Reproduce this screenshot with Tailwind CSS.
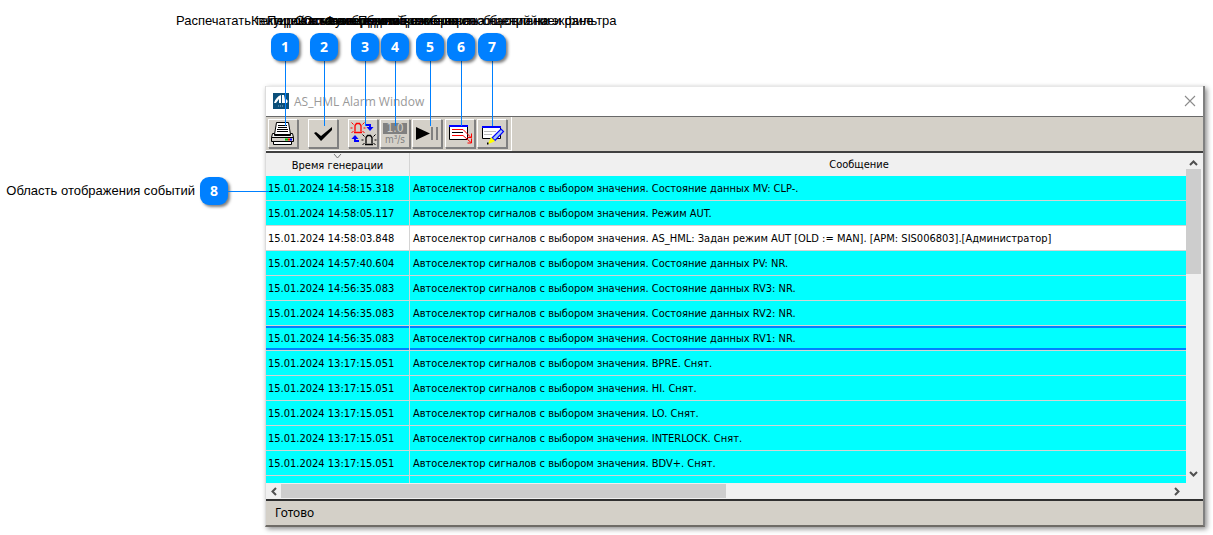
<!DOCTYPE html>
<html lang="ru">
<head>
<meta charset="utf-8">
<title>AS_HML Alarm Window</title>
<script src="https://cdn.jsdelivr.net/npm/@tailwindcss/browser@4"></script>
</head>
<body class="bg-white text-black font-['Liberation_Sans',sans-serif]">
<main class="relative pt-[86px] pr-2 pb-[9px] pl-[265px]">

<section class="border-r-2 border-b-2 border-l border-r-[#808080] border-b-[#6e6b66] border-l-[#dcdcdc] shadow-[2px_2px_5px_rgba(0,0,0,0.45)] bg-[#f0f0f0]">
  <header class="flex h-[30px] items-center justify-between border-t border-[#e8e8e8] bg-white pl-[7px] pr-[7px]">
    <div class="flex items-center gap-[5px]">
      <svg class="mb-[2px] h-4 w-4" viewBox="0 0 16 16" aria-hidden="true"><path fill="#0b4f7a" d="M0 0h16v16H0z"/><path fill="#fff" d="M1 10C2 6 5 3 8 2v8H6V6L3 10zM9 2h2q1 3 1 8H9zM13 6c2 1 2 3 1 4h-1z"/><path stroke="#8db5cc" stroke-dasharray="1 1" d="M5 13h6"/></svg>
      <h1 class="text-xs font-normal text-[#999] font-['Open_Sans',sans-serif]">AS_HML Alarm Window</h1>
    </div>
    <button aria-label="Закрыть"><svg class="mb-[2px] h-3 w-3" viewBox="0 0 12 12" fill="none" stroke="#8c8c8c" stroke-width="1.1"><path d="M1 1l10 10M11 1L1 11"/></svg></button>
  </header>

  <div class="flex h-[37px] border-t border-b-2 border-t-[#696969] border-b-[#404040] bg-[#d4d0c8]">
    <div class="flex h-[34px] items-start gap-[2px] border-r border-b border-white pt-[2px] pr-1 pl-[2px]">
      <button aria-label="Распечатать" class="mr-2 flex h-[29px] w-[30px] items-center justify-center border border-t-white border-l-white border-r-[#808080] border-b-[#808080] shadow-[1px_1px_0_#808080]">
        <svg class="h-7 w-7 shrink-0" viewBox="0 0 28 28"><path fill="#fff" stroke="#000" d="M7.500 2.500h12l2 12h-16z"/><path stroke="#000" d="M9 5.500h9M9 7.500h9M8 9.500h11M8 11.500h11"/><path fill="#eee" stroke="#000" d="M5.500 13.500h-2l-1 4h22l-1-4h-2v2h-16z"/><path fill="#d4d0c8" stroke="#000" d="M2.500 17.500h22v4h-22z"/><path stroke="#00c000" stroke-width="2" d="M16 19.500h3"/><path stroke="red" stroke-width="2" d="M19 19.500h2"/><path stroke="#00f" stroke-width="2" d="M21 19.500h2"/><path fill="#fff" stroke="#000" d="M4.500 21.500h18v3h-18z"/></svg>
      </button>
      <button aria-label="Квитировать" class="mr-2 flex h-[29px] w-[30px] items-center justify-center border border-t-white border-l-white border-r-[#808080] border-b-[#808080] shadow-[1px_1px_0_#808080]">
        <svg class="h-7 w-7 shrink-0" viewBox="0 0 28 28"><path d="M5 13l2-1 5 4 11-9v3L12 21z"/></svg>
      </button>
      <button aria-label="Переключить сигнализацию" class="flex h-[29px] w-[30px] items-center justify-center border border-t-white border-l-white border-r-[#808080] border-b-[#808080] shadow-[1px_1px_0_#808080]">
        <svg class="h-7 w-7 shrink-0" viewBox="0 0 28 28" fill="none"><path stroke="red" stroke-width="1.300" d="M6 11.500V5.500L7.500 3.500h3l1.500 2v6M5 12.500h8"/><path stroke="red" d="M2.500 2.500l2 2M1.500 8h2M2.500 13l2-2M15.500 2.500l-2 2M14.500 8h2M15.500 13l-2-2"/><path stroke="#000" stroke-width="1.300" d="M17 23.500v-6l1.500-2h3l1.500 2v6M16 24.500h8"/><path stroke="#000" d="M13.500 14.500l2 2M12.500 20h2M13.500 25l2-2M26.500 14.500l-2 2M25.500 20h2M26.500 25l-2-2"/><path stroke="#00f" stroke-width="2" d="M17 5h4v3M10 21H6v-2"/><path fill="#00f" d="M17.500 7h7L21 11zM2.500 19h7L6 15z"/></svg>
      </button>
      <button aria-label="Единицы измерения" class="flex h-[29px] w-[30px] flex-col items-center border border-t-white border-l-white border-r-[#808080] border-b-[#808080] shadow-[1px_1px_0_#808080] pt-[3px] text-[#808080] font-['DejaVu_Sans_Condensed',sans-serif]">
        <span class="h-[11px] w-[24px] bg-[#808080] text-xs leading-[11px] text-[#d4d0c8]">1.0</span>
        <span class="text-[10px] leading-3">m³/s</span>
      </button>
      <button aria-label="Пуск и пауза" class="flex h-[29px] w-[30px] items-center justify-center border border-t-white border-l-white border-r-[#808080] border-b-[#808080] shadow-[1px_1px_0_#808080]">
        <svg class="h-7 w-7 shrink-0" viewBox="0 0 28 28"><path d="M3 7l14 6.500L3 20z"/><path fill="#808080" d="M18 7h2v13h-2zM23 7h2v13h-2z"/></svg>
      </button>
      <button aria-label="Сообщения" class="ml-[1px] flex h-[29px] w-[30px] items-center justify-center border border-t-white border-l-white border-r-[#808080] border-b-[#808080] shadow-[1px_1px_0_#808080]">
        <svg class="h-7 w-7 shrink-0" viewBox="0 0 28 28" fill="none"><path fill="#fff" stroke="#000" d="M3.500 5.500h18v14h-18z"/><path stroke="#00f" stroke-width="2" d="M3 6h19"/><path stroke="red" d="M6 9.500h11l8 8M6 15.500h11l8 7M25.500 13.500v4h-4M25.500 18.500v4.500h-4"/><path stroke="#000" d="M6 12.500h11"/></svg>
      </button>
      <button aria-label="Настройка фильтра" class="flex h-[29px] w-[30px] items-center justify-center border border-t-white border-l-white border-r-[#808080] border-b-[#808080] shadow-[1px_1px_0_#808080]">
        <svg class="h-7 w-7 shrink-0" viewBox="0 0 28 28" fill="none"><path fill="#fff" stroke="#000" d="M4.500 6.500h18v12h-18z"/><path stroke="#00f" stroke-width="2" d="M4 7h19"/><path stroke="#bbb" d="M6 11.500h12M6 14.500h8"/><path fill="#a8c8f8" stroke="#00f" stroke-width="1.200" d="M14 18l9-9 2.500 2.500-8.500 9z"/><path fill="#ff0" d="M13 17l4 4-4 2-3 1z"/><path stroke="#000" stroke-width="2" d="M9 23.500h1.500"/></svg>
      </button>
    </div>
  </div>

  <div class="flex">
    <table class="min-w-0 grow table-fixed border-collapse text-[11px] leading-[14px] font-['DejaVu_Sans_Condensed',sans-serif]">
      <colgroup><col class="w-[144px]"><col></colgroup>
      <thead>
        <tr class="h-[23px]">
          <th scope="col" class="p-0 font-normal">
            <span class="flex h-[23px] flex-col items-center border-r border-[#d4d4d4] pt-[1px]"><svg class="h-[5px] w-[9px]" viewBox="0 0 9 5" fill="none" stroke="#777" aria-hidden="true"><path d="M1 0l3.500 4L8 0"/></svg>Время генерации</span>
          </th>
          <th scope="col" class="p-0 pt-[1px] pl-[122px] text-center font-normal">Сообщение</th>
        </tr>
      </thead>
      <tbody id="rows"></tbody>
    </table>
    <div class="flex w-[17px] flex-col items-center pt-[7px] pr-[2px] pb-[6px]">
      <svg class="h-[6px] w-[9px]" viewBox="0 0 9 6" fill="none" stroke="#505050" stroke-width="2"><path d="M1 5l3.500-3.500L8 5"/></svg>
      <div class="mt-[3px] h-[105px] w-[15px] bg-[#cdcdcd]"></div>
      <svg class="mt-auto h-[6px] w-[9px]" viewBox="0 0 9 6" fill="none" stroke="#505050" stroke-width="2"><path d="M1 1l3.500 3.500L8 1"/></svg>
    </div>
  </div>

  <div class="flex h-4 items-center pr-[23px] pl-[5px]">
    <svg class="h-[9px] w-[6px]" viewBox="0 0 6 9" fill="none" stroke="#505050" stroke-width="2"><path d="M5 1L1.500 4.500 5 8"/></svg>
    <div class="ml-1 h-[14px] w-[49%] bg-[#cdcdcd]"></div>
    <svg class="ml-auto h-[9px] w-[6px]" viewBox="0 0 6 9" fill="none" stroke="#505050" stroke-width="2"><path d="M1 1l3.500 3.500L1 8"/></svg>
  </div>
  <footer class="flex h-[26px] items-center border-t-2 border-[#303030] bg-[#d4d0c8] pl-[9px] text-xs leading-4 font-['Noto_Sans',sans-serif]">Готово</footer>
</section>

<div id="callouts"></div>

<div class="absolute top-[177px] left-0 flex h-7 items-center gap-[5px]">
  <span class="w-[195px] text-right text-[13px] leading-4 whitespace-nowrap">Область отображения событий</span>
  <span class="flex h-7 w-7 items-center justify-center rounded-[9px] bg-[#0080ff] text-sm font-bold text-white shadow-[2px_2px_3px_rgba(0,0,0,0.5)] font-['Open_Sans',sans-serif]">8</span>
</div>
<div class="absolute top-[191px] left-[228px] h-px w-[41px] bg-[#0080ff]"></div>
</main>

<script>
const base = 'Автоселектор сигналов с выбором значения. ';
const events = [
  ['15.01.2024 14:58:15.318', 'Состояние данных MV: CLP-.'],
  ['15.01.2024 14:58:05.117', 'Режим AUT.'],
  ['15.01.2024 14:58:03.848', 'AS_HML: Задан режим AUT [OLD := MAN]. [АРМ: SIS006803].[Администратор]', 'white'],
  ['15.01.2024 14:57:40.604', 'Состояние данных PV: NR.'],
  ['15.01.2024 14:56:35.083', 'Состояние данных RV3: NR.'],
  ['15.01.2024 14:56:35.083', 'Состояние данных RV2: NR.'],
  ['15.01.2024 14:56:35.083', 'Состояние данных RV1: NR.', 'selected'],
  ['15.01.2024 13:17:15.051', 'BPRE. Снят.'],
  ['15.01.2024 13:17:15.051', 'HI. Снят.'],
  ['15.01.2024 13:17:15.051', 'LO. Снят.'],
  ['15.01.2024 13:17:15.051', 'INTERLOCK. Снят.'],
  ['15.01.2024 13:17:15.051', 'BDV+. Снят.'],
];
const fill = {
  white: 'bg-white',
  selected: 'bg-[#00ffff] shadow-[inset_0_2px_0_#0080ff,inset_0_-2px_0_#0080ff]',
};
document.getElementById('rows').innerHTML = events.map(([time, text, kind]) => {
  const c = fill[kind] || 'bg-[#00ffff]';
  return `<tr class="bg-[#d4d4d4]">
    <td class="p-0"><div class="mr-px mb-px h-6 pt-[6px] pl-[2px] whitespace-nowrap ${c}">${time}</div></td>
    <td class="p-0"><div class="mb-px h-6 overflow-hidden pt-[6px] pl-[3px] whitespace-nowrap ${c}">${base}${text}</div></td>
  </tr>`;
}).join('') + `<tr class="bg-[#d4d4d4]">
    <td class="p-0"><div class="mr-px h-[7px] bg-[#00ffff]"></div></td>
    <td class="p-0"><div class="h-[7px] bg-[#00ffff]"></div></td>
  </tr>`;

const callouts = [
  [285, 176, 'Распечатать текущий список событий'],
  [324, 251, 'Квитировать сообщения'],
  [365, 267, 'Переключение режима сигнала'],
  [395, 295, 'Состояние единиц измерения'],
  [430, 303, 'Остановить или возобновить обновление'],
  [461, 325, 'Функция отображения сообщений на экране'],
  [492, 358, 'Подключение экрана настройки и фильтра'],
];
document.getElementById('callouts').innerHTML = callouts.map(([x, left, text], i) => `
  <span class="absolute top-[13px] text-[13px] leading-4 whitespace-nowrap" style="left:${left}px">${text}</span>
  <span class="absolute top-[61px] h-[65px] w-px bg-[#0080ff]" style="left:${x}px"></span>
  <span class="absolute top-[33px] flex h-7 w-7 items-center justify-center rounded-[9px] bg-[#0080ff] text-sm font-bold text-white shadow-[2px_2px_3px_rgba(0,0,0,0.5)] font-['Open_Sans',sans-serif]" style="left:${x - 14}px">${i + 1}</span>`).join('');
</script>
</body>
</html>
